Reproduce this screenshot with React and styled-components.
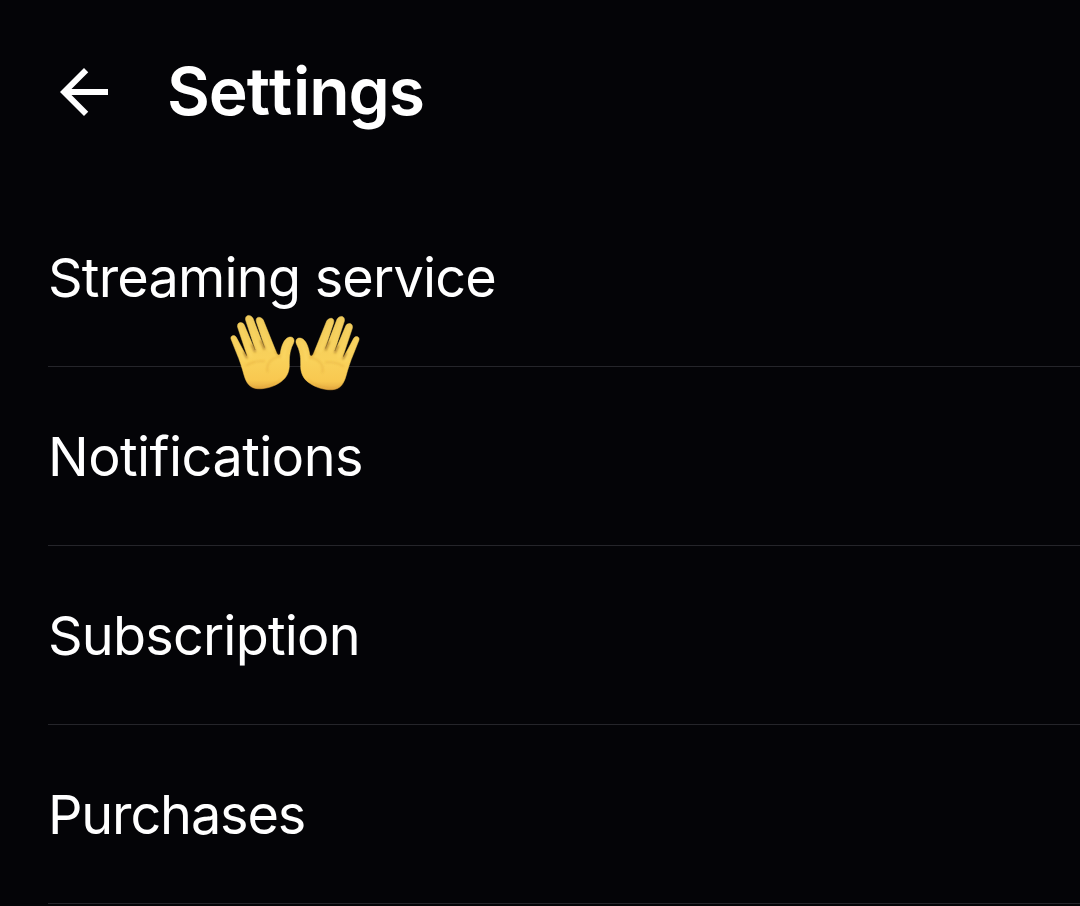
import React from "react";
import styled, { createGlobalStyle } from "styled-components";

const GlobalStyle = createGlobalStyle`
  body {
    margin: 0;
    background: #040407;
    overflow: hidden;
  }
`;

const Page = styled.main`
  box-sizing: border-box;
  height: 906px;
  overflow: hidden;
  background: #040407;
  color: #ffffff;
  font-family: Inter, sans-serif;
`;

const Header = styled.header`
  display: flex;
  align-items: center;
  gap: 47px;
  height: 72px;
  padding: 56px 48px 60px;
`;

const BackButton = styled.button`
  display: flex;
  width: 72px;
  height: 72px;
  padding: 0;
  border: 0;
  background: none;
  color: inherit;
`;

const Title = styled.h1`
  margin: 0;
  padding-bottom: 2px;
  font-size: 66px;
  font-weight: 620;
  line-height: 72px;
  letter-spacing: -1.1px;
`;

const Loose = styled.span`
  letter-spacing: 0.9px;
`;

const List = styled.ul`
  margin: 0;
  padding: 0 0 0 48px;
  list-style: none;
`;

const Row = styled.li`
  position: relative;
  display: flex;
  align-items: center;
  height: 178px;
  border-bottom: 1px solid #25252a;
  font-size: 54px;
  font-weight: 400;
  letter-spacing: ${(props) => props.$spacing || "-0.8px"};
  white-space: nowrap;
`;

const Hands = styled.div`
  position: absolute;
  top: 117px;
  left: 172px;
  display: flex;
`;

const HandIcon = styled.svg`
  width: 80px;
  height: 95px;
  flex: none;

  & + & {
    margin-left: -10px;
    transform: translateY(1px) scaleX(-1);
  }
`;

const Hand = ({ id }) => (
  <HandIcon viewBox="0 0 240 285" aria-hidden="true">
    <defs>
      <linearGradient id={`${id}-skin`} x1="0" y1="35" x2="0" y2="252" gradientUnits="userSpaceOnUse">
        <stop offset="0" stopColor="#f0cb5c" />
        <stop offset="0.6" stopColor="#f9d15a" />
        <stop offset="0.88" stopColor="#f8c850" />
        <stop offset="1" stopColor="#e5ab42" />
      </linearGradient>
      <filter id={`${id}-soft`} x="-30%" y="-30%" width="160%" height="160%">
        <feGaussianBlur stdDeviation="2.5" />
      </filter>
    </defs>
    <path
      fill={`url(#${id}-skin)`}
      stroke={`url(#${id}-skin)`}
      strokeWidth="1.5"
      strokeLinejoin="round"
      d="M33 102C30 91 44 88 49 97L79 153L81 151L53 67C49 51 67 48 73 60L105 136L106 134L77 46C73 29 92 26 99 40L133 128L134 126L109 50C105 35 122 32 130 45L169 142C173 153 179 152 181 145C184 123 192 102 206 97C218 93 225 102 221 113C211 132 207 151 208 176C209 200 200 219 182 231C161 246 132 253 112 251C90 249 79 235 72 210C66 188 59 166 50 145Z"
    />
    <g fill="none" strokeLinecap="round" filter={`url(#${id}-soft)`}>
      <path stroke="#8a5a1c" strokeWidth="5" opacity="0.75" d="M72 142L80 158M96 120L105 139M123 108L133 131" />
      <path stroke="#a96b19" strokeWidth="3" opacity="0.6" d="M166 138Q172 153 179 150" />
      <path stroke="#d79a31" strokeWidth="4" opacity="0.45" d="M181 155C153 158 137 177 143 200M79 181Q104 166 133 169" />
      <path stroke="#ffe071" strokeWidth="5" opacity="0.45" d="M42 103L72 164M62 65L94 154M88 46L119 137M119 50L150 137M208 107Q194 127 191 161" />
      <path stroke="#ca852b" strokeWidth="3" opacity="0.35" d="M83 235Q95 251 121 248Q160 243 187 222" />
    </g>
  </HandIcon>
);

const App = () => {
  return (
    <>
      <GlobalStyle />
      <Page>
        <Header>
          <BackButton aria-label="Back">
            <svg width="72" height="72" viewBox="0 0 24 24" fill="currentColor">
              <path d="M20 11H7.83l5.59-5.59L12 4l-8 8 8 8 1.41-1.41L7.83 13H20z" />
            </svg>
          </BackButton>
          <Title>
            Se<Loose>tt</Loose>ings
          </Title>
        </Header>
        <List>
          <Row>
            Streaming service
            <Hands>
              <Hand id="left" />
              <Hand id="right" />
            </Hands>
          </Row>
          <Row $spacing="-0.55px">Notifications</Row>
          <Row $spacing="-0.8px">Subscription</Row>
          <Row $spacing="-1.15px">Purchases</Row>
        </List>
      </Page>
    </>
  );
};

export default App;
